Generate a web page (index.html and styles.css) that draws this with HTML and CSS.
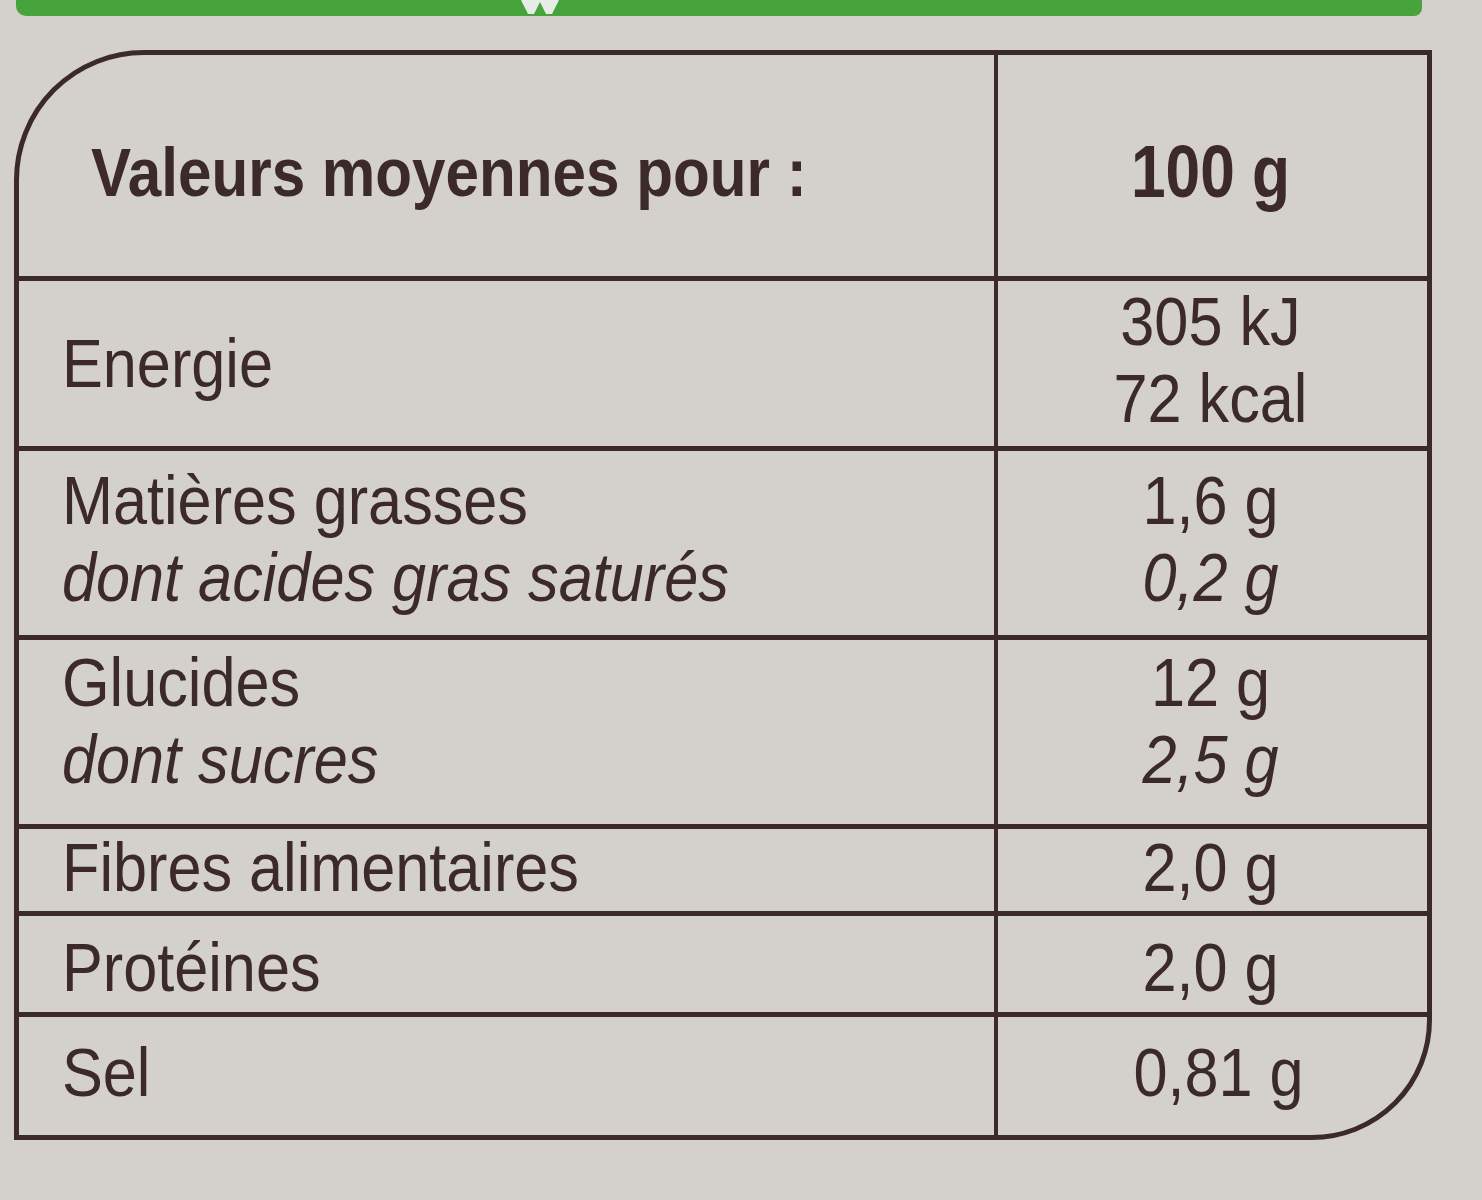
FILE: index.html
```html
<!DOCTYPE html>
<html lang="fr">
<head>
<meta charset="utf-8">
<title>Valeurs nutritionnelles</title>
<link rel="stylesheet" href="styles.css">
</head>
<body>
<div class="band">
  <svg class="band-mark" width="60" height="18" viewBox="0 0 60 18" aria-hidden="true">
    <path d="M4 0 L12 16 L18 16 L24 4 L30 16 L36 16 L44 0 Z" fill="#e6ece6"/>
  </svg>
</div>
<div class="label">
  <div class="row head">
    <div class="name"><div class="txt">Valeurs moyennes pour :</div></div>
    <div class="val"><div class="txt">100 g</div></div>
  </div>
  <div class="row r-energy">
    <div class="name"><div class="txt">Energie</div></div>
    <div class="val"><div class="txt">305 kJ<br>72 kcal</div></div>
  </div>
  <div class="row r-fat">
    <div class="name"><div class="txt">Matières grasses<br><i>dont acides gras saturés</i></div></div>
    <div class="val"><div class="txt">1,6 g<br><i>0,2 g</i></div></div>
  </div>
  <div class="row r-carb">
    <div class="name"><div class="txt">Glucides<br><i>dont sucres</i></div></div>
    <div class="val"><div class="txt">12 g<br><i>2,5 g</i></div></div>
  </div>
  <div class="row r-fibre">
    <div class="name"><div class="txt">Fibres alimentaires</div></div>
    <div class="val"><div class="txt">2,0 g</div></div>
  </div>
  <div class="row r-prot">
    <div class="name"><div class="txt">Protéines</div></div>
    <div class="val"><div class="txt">2,0 g</div></div>
  </div>
  <div class="row r-salt">
    <div class="name"><div class="txt">Sel</div></div>
    <div class="val"><div class="txt">0,81 g</div></div>
  </div>
</div>
</body>
</html>
```

FILE: styles.css
```css
html, body {
  margin: 0;
  padding: 0;
}
body {
  width: 1482px;
  height: 1200px;
  overflow: hidden;
  background: #d4d0cc;
  color: #3c2a28;
  font-family: "Liberation Sans", Arial, sans-serif;
  font-size: 68px;
  line-height: 77px;
}
.band {
  margin-left: 16px;
  width: 1406px;
  height: 16px;
  background: #47a43c;
  border-radius: 0 0 8px 10px;
  padding-left: 500px;
  box-sizing: border-box;
  display: flex;
}
.band-mark {
  display: block;
  margin-top: -2px;
}
.label {
  margin: 34px 0 0 14px;
  width: 1418px;
  box-sizing: border-box;
  border: 5px solid #3c2a28;
  border-top-left-radius: 130px;
  border-bottom-right-radius: 120px;
  overflow: hidden;
}
.row {
  display: grid;
  grid-template-columns: 979px 1fr;
  box-sizing: border-box;
  border-bottom: 5px solid #3c2a28;
}
.row:last-child {
  border-bottom: none;
}
.name {
  border-right: 4px solid #3c2a28;
  padding-left: 43px;
  display: flex;
  flex-direction: column;
  justify-content: center;
  padding-bottom: 8px;
}
.val {
  text-align: center;
  display: flex;
  flex-direction: column;
  justify-content: center;
  padding-bottom: 8px;
  padding-right: 4px;
}
.txt {
  transform: scaleX(0.9);
  transform-origin: left center;
  white-space: nowrap;
}
.val .txt {
  transform-origin: center center;
}
i {
  font-style: italic;
}
.head {
  height: 226px;
  font-weight: bold;
}
.head .name {
  padding-left: 72px;
  padding-bottom: 0;
  padding-top: 14px;
}
.head .name .txt {
  transform: scaleX(0.885);
}
.head .val {
  padding-bottom: 0;
  padding-top: 12px;
  font-size: 75px;
}
.head .val .txt {
  transform: scaleX(0.83);
}
.r-energy { height: 170px; }
.r-energy .name { padding-top: 8px; }
.r-fat { height: 189px; }
.r-carb { height: 189px; }
.r-carb .name, .r-carb .val { padding-bottom: 22px; }
.r-fibre { height: 87px; }
.r-fibre .name, .r-fibre .val { padding-bottom: 12px; }
.r-prot { height: 101px; }
.r-prot .name, .r-prot .val { padding-bottom: 0; padding-top: 6px; }
.r-salt { height: 118px; }
.r-salt .val { padding-left: 16px; }
```
